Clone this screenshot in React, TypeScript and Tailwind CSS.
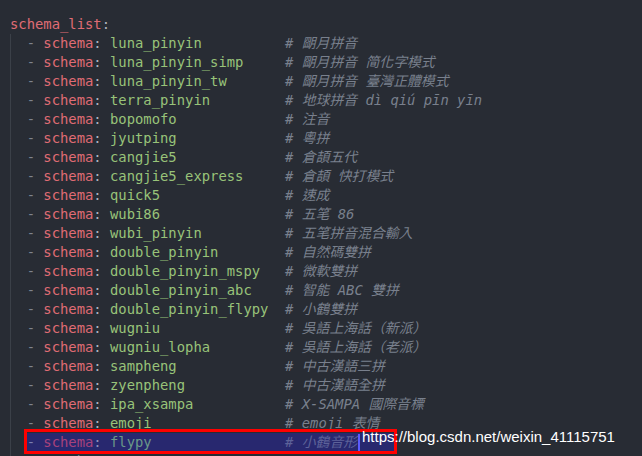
import React from "react";

const rows: [string, string][] = [
  ["luna_pinyin", "朙月拼音"],
  ["luna_pinyin_simp", "朙月拼音 简化字模式"],
  ["luna_pinyin_tw", "朙月拼音 臺灣正體模式"],
  ["terra_pinyin", "地球拼音 dì qiú pīn yīn"],
  ["bopomofo", "注音"],
  ["jyutping", "粵拼"],
  ["cangjie5", "倉頡五代"],
  ["cangjie5_express", "倉頡 快打模式"],
  ["quick5", "速成"],
  ["wubi86", "五笔 86"],
  ["wubi_pinyin", "五笔拼音混合輸入"],
  ["double_pinyin", "自然碼雙拼"],
  ["double_pinyin_mspy", "微軟雙拼"],
  ["double_pinyin_abc", "智能 ABC 雙拼"],
  ["double_pinyin_flypy", "小鶴雙拼"],
  ["wugniu", "吳語上海話（新派）"],
  ["wugniu_lopha", "吳語上海話（老派）"],
  ["sampheng", "中古漢語三拼"],
  ["zyenpheng", "中古漢語全拼"],
  ["ipa_xsampa", "X-SAMPA 國際音標"],
  ["emoji", "emoji 表情"],
];

const pad = (s: string, n: number) => s + " ".repeat(Math.max(1, n - s.length));

export default function App() {
  return (
    <div className="relative w-[642px] h-[456px] overflow-hidden bg-[#282c34] font-['DejaVu_Sans_Mono','Noto_Sans_CJK_TC',monospace] text-[13.85px] leading-[19px] whitespace-pre">
      <div className="pt-[15px] pl-[10px]">
        <div className="h-[19px]">
          <span className="text-[#e06c75]">schema_list</span>
          <span className="text-[#abb2bf]">:</span>
        </div>
        <div className="relative">
          <div className="absolute left-0 top-0 bottom-[-40px] w-px bg-[#3b4048]" />
          {rows.map(([v, c]) => (
            <div key={v} className="h-[19px]">
              <span className="text-[#7f848e]">{"  - "}</span>
              <span className="text-[#e06c75]">schema</span>
              <span className="text-[#abb2bf]">{": "}</span>
              <span className="text-[#98c379]">{pad(v, 21)}</span>
              <span className="italic text-[#79808d]">{"# " + c}</span>
            </div>
          ))}
          <div className="h-[19px] flex">
            <span>{"  "}</span>
            <div className="relative flex items-center h-[19px] bg-[#28286f] pr-[34px]">
              <span className="text-[#7a7fb0]">{"- "}</span>
              <span className="text-[#a8427c]">schema</span>
              <span className="text-[#8c90b8]">{": "}</span>
              <span className="text-[#6b9a88]">{pad("flypy", 21)}</span>
              <span className="italic text-[#5d6299]">{"# 小鶴音形"}</span>
              <span className="ml-[1px] w-[2px] h-[18px] bg-[#5b5bff]" />
              <div className="absolute left-[-3px] right-[-3px] top-[-4px] bottom-[-2px] border-[3px] border-[#ff0000]" />
            </div>
          </div>
          <div className="h-[19px]">
            <span className="text-[#7f848e]">{"  # - schema: "}</span>
          </div>
        </div>
      </div>
      <div className="absolute left-[362px] top-[428px] font-['Liberation_Sans',Arial,sans-serif] text-[15px] leading-[18px] text-white">
        https://blog.csdn.net/weixin_41115751
      </div>
    </div>
  );
}
